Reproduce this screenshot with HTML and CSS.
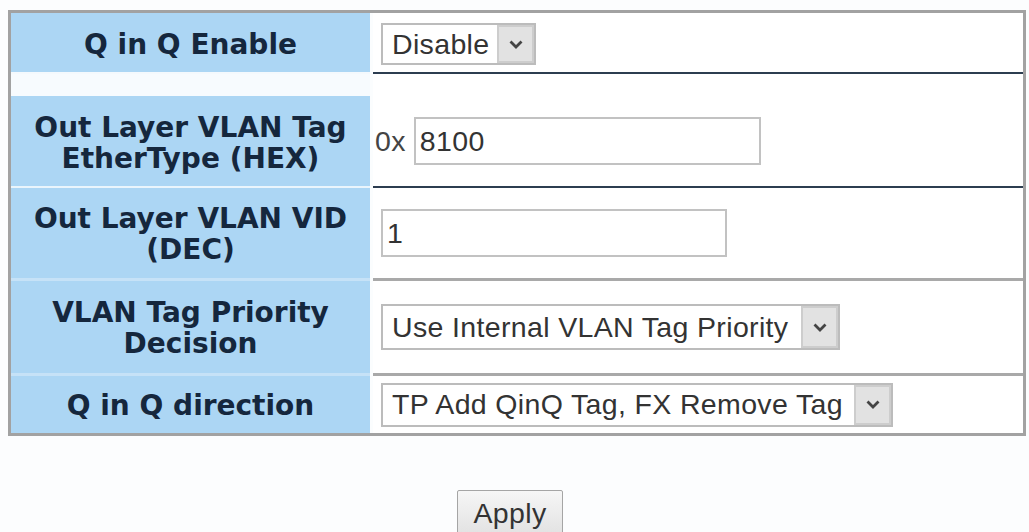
FILE: index.html
```html
<!DOCTYPE html>
<html lang="en">
<head>
<meta charset="utf-8">
<title>Q in Q</title>
<link rel="stylesheet" href="styles.css">
</head>
<body>
<div class="cfg">
  <div class="lbl r1">Q in Q Enable</div>
  <div class="val r1">
    <div class="select sel-enable"><span class="sel-text">Disable</span><span class="sel-btn"><svg width="16" height="11" viewBox="0 0 16 11"><path d="M2.5 2.5 L8 8 L13.5 2.5" fill="none" stroke="#444" stroke-width="2.8"/></svg></span></div>
  </div>

  <div class="lbl r2">Out Layer VLAN Tag<br>EtherType (HEX)</div>
  <div class="val r2"><span class="prefix">0x</span><input class="txt txt-hex" type="text" value="8100"></div>

  <div class="lbl r3">Out Layer VLAN VID<br>(DEC)</div>
  <div class="val r3"><input class="txt txt-vid" type="text" value="1"></div>

  <div class="lbl r4">VLAN Tag Priority<br>Decision</div>
  <div class="val r4">
    <div class="select sel-prio"><span class="sel-text">Use Internal VLAN Tag Priority</span><span class="sel-btn"><svg width="16" height="11" viewBox="0 0 16 11"><path d="M2.5 2.5 L8 8 L13.5 2.5" fill="none" stroke="#444" stroke-width="2.8"/></svg></span></div>
  </div>

  <div class="lbl r5">Q in Q direction</div>
  <div class="val r5">
    <div class="select sel-dir"><span class="sel-text">TP Add QinQ Tag, FX Remove Tag</span><span class="sel-btn"><svg width="16" height="11" viewBox="0 0 16 11"><path d="M2.5 2.5 L8 8 L13.5 2.5" fill="none" stroke="#444" stroke-width="2.8"/></svg></span></div>
  </div>
</div>
<div class="actions"><button class="btn" type="button">Apply</button></div>
</body>
</html>
```

FILE: styles.css
```css
body {
  margin: 10px 3px 0 8px;
  background: #fcfdfe;
}

.cfg {
  width: 1018px;
  box-sizing: border-box;
  border: 3px solid #a2a2a2;
  display: grid;
  grid-template-columns: 359px 1fr;
  grid-template-rows: 61px 114px 93px 95px 57px;
  column-gap: 3px;
  background: #fbfdfe;
}

.lbl {
  display: flex;
  align-items: center;
  justify-content: center;
  text-align: center;
  box-sizing: border-box;
  background: #acd6f4;
  color: #15273d;
  font: bold 28px/31px "DejaVu Sans", sans-serif;
}

.lbl.r1 { border-bottom: 2px solid #f4f9fd; padding-top: 3px; }
.lbl.r2 { border-top: 22px solid #f7fbfe; border-bottom: 2px solid #eaf5fc; padding-top: 4px; }
.lbl.r3, .lbl.r4 { border-bottom: 3px solid #c6e2f7; padding-top: 2px; }
.lbl.r5 { padding-top: 2px; }

.val {
  display: flex;
  align-items: center;
  box-sizing: border-box;
  padding-left: 8px;
  background: #ffffff;
  color: #333333;
  font: 28.5px "Liberation Sans", Arial, sans-serif;
  letter-spacing: 0.35px;
}

.val.r1 { border-bottom: 2px solid #2c3d50; padding-top: 3px; }
.val.r2 { border-bottom: 2px solid #2c3d50; padding-top: 22px; padding-left: 2px; }
.val.r3, .val.r4 { border-bottom: 3px solid #a9a9a9; }

.prefix { margin-right: 8px; color: #444; }

.txt {
  box-sizing: border-box;
  height: 48px;
  margin: 0;
  padding: 0 4px;
  border: 2px solid #c2c2c2;
  background: #fff;
  color: #333;
  font: 28.5px "Liberation Sans", Arial, sans-serif;
  letter-spacing: 0.35px;
  outline: none;
}
.txt-hex { width: 347px; }
.txt-vid { width: 346px; }

.select {
  display: inline-flex;
  align-items: stretch;
  box-sizing: border-box;
  border: 2px solid #bcbcbc;
  background: #fff;
}
.sel-text {
  flex: 1;
  display: flex;
  align-items: center;
  padding-left: 9px;
  white-space: nowrap;
  overflow: hidden;
}
.sel-btn {
  width: 37px;
  box-sizing: border-box;
  display: flex;
  align-items: center;
  justify-content: center;
  background: #e2e2e2;
  border: 2px solid #cdcdcd;
}
.sel-enable { width: 155px; height: 42px; }
.sel-prio { width: 459px; height: 46px; }
.sel-dir { width: 512px; height: 44px; }

.actions {
  width: 1018px;
  box-sizing: border-box;
  display: flex;
  justify-content: center;
  padding-right: 14px;
  margin-top: 54px;
}
.btn {
  width: 106px;
  height: 46px;
  padding: 0;
  border: 1px solid #a5a5a5;
  border-radius: 2px;
  background: linear-gradient(#f6f6f6, #e2e2e2);
  color: #333;
  font: 28.5px "Liberation Sans", Arial, sans-serif;
  letter-spacing: 0.35px;
}
```
